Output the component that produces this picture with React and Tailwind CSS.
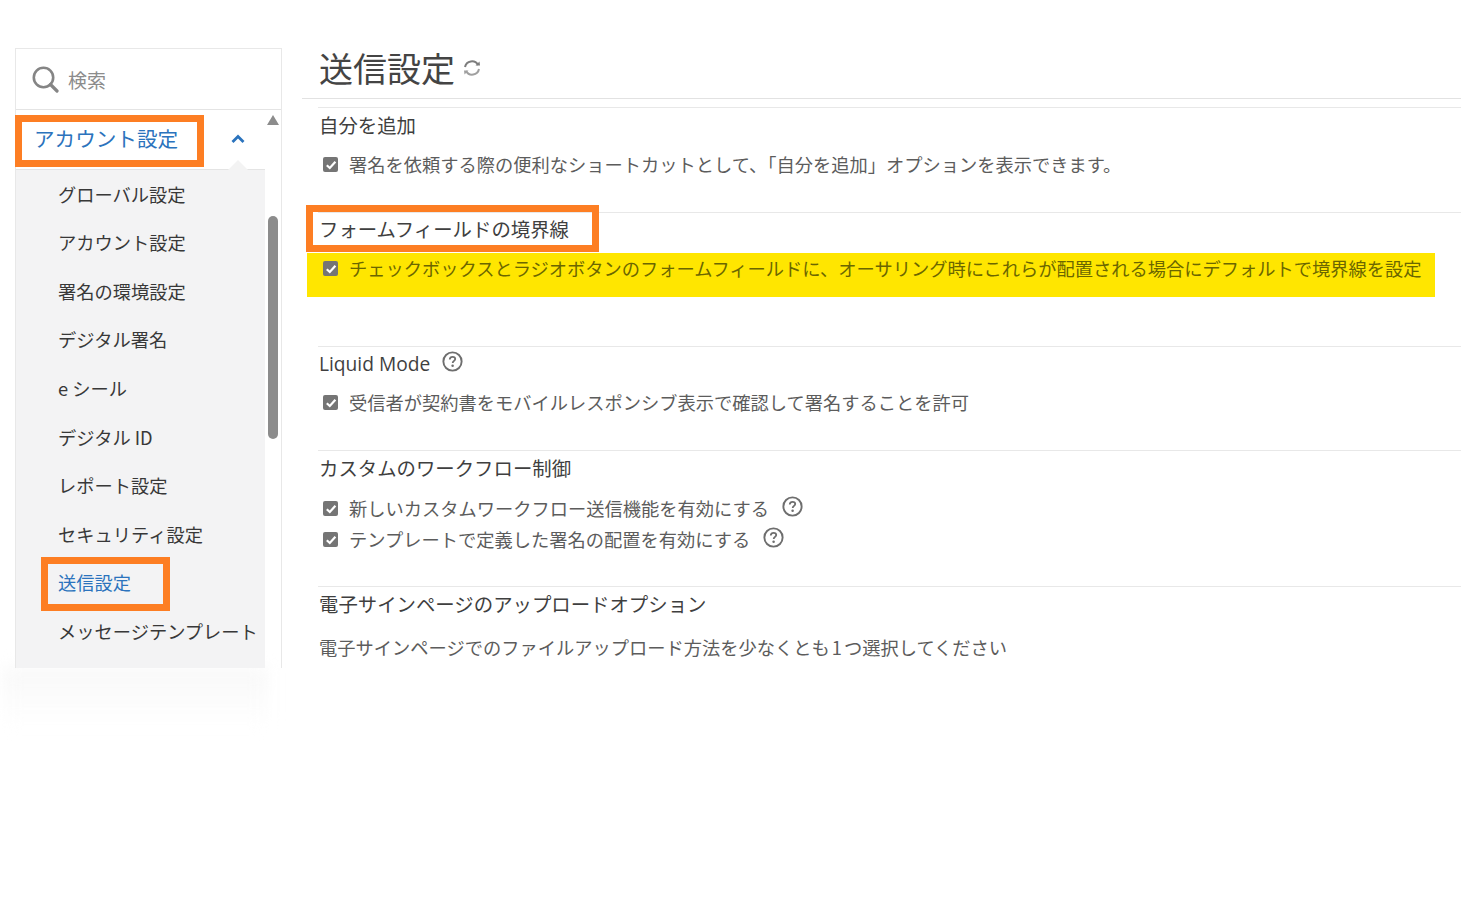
const font = { fontFamily: '"Noto Sans CJK JP", "Noto Sans", sans-serif' };

function Check() {
  return (
    <span className="w-[15px] h-[15px] mt-[1px] rounded-[2px] bg-[#757575] shrink-0 flex items-center justify-center">
      <svg width="12" height="12" viewBox="0 0 12 12" fill="none">
        <path d="M1.8 6.2 L4.8 9 L10.4 2.8" stroke="#ffffff" strokeWidth="2.2" />
      </svg>
    </span>
  );
}

function Help({ className = "" }) {
  return (
    <svg width="21" height="21" viewBox="0 0 20 20" fill="none" className={"shrink-0 " + className}>
      <circle cx="10" cy="10" r="8.7" stroke="#6e6e6e" strokeWidth="1.8" />
      <path d="M7.4 8 C7.4 6.3 8.6 5.5 10 5.5 C11.5 5.5 12.6 6.4 12.6 7.7 C12.6 9.4 10.2 9.5 10.2 11.4" stroke="#6e6e6e" strokeWidth="1.7" />
      <circle cx="10.1" cy="14" r="1.2" fill="#6e6e6e" />
    </svg>
  );
}

function CheckRow({ children, className = "" }) {
  return (
    <div className={"flex items-center gap-[11px] text-[18.25px] leading-[26px] text-[#5c5c5c] whitespace-nowrap " + className}>
      <Check />
      <span>{children}</span>
    </div>
  );
}

const items = ["グローバル設定", "アカウント設定", "署名の環境設定", "デジタル署名", "e シール", "デジタル ID", "レポート設定", "セキュリティ設定", "送信設定", "メッセージテンプレート"];

export default function App() {
  return (
    <div style={font} className="w-[1461px] h-[919px] bg-white flex items-start overflow-hidden relative">
      <aside className="w-[267px] ml-[15px] mt-[48px] shrink-0">
        <div className="h-[620px] border-x border-t border-[#e8e8e8] flex flex-col relative z-10">
          <div className="h-[61px] shrink-0 border-b border-[#e4e4e4] flex items-center pl-[15px] gap-[9px]">
            <svg width="28" height="28" viewBox="0 0 28 28" fill="none">
              <circle cx="12.5" cy="12.5" r="9.7" stroke="#858585" strokeWidth="2.6" />
              <path d="M19.5 19.5 L26 26" stroke="#858585" strokeWidth="3.2" strokeLinecap="round" />
            </svg>
            <span className="text-[19px] text-[#8c8c8c] mt-[3px]">検索</span>
          </div>
          <div className="flex-1 flex min-h-0">
            <div className="w-[249px] flex flex-col">
              <div className="h-[60px] shrink-0 flex items-center justify-between pl-[18px] pr-[20px] bg-white border-b border-[#e4e4e4] relative">
                <span className="text-[20.6px] text-[#2b73bd] whitespace-nowrap -mt-[3px]">アカウント設定</span>
                <svg width="14" height="10" viewBox="0 0 14 10" fill="none" className="-mt-[2px]">
                  <path d="M1.5 8 L7 2.5 L12.5 8" stroke="#2b73bd" strokeWidth="2.8" />
                </svg>
                <span className="absolute right-[17px] -bottom-[1px] w-0 h-0 border-x-[10px] border-x-transparent border-b-[10px] border-b-[#f3f3f3]" />
              </div>
              <div className="flex-1 bg-[#f3f3f4] pl-[42px]">
                {items.map((t) => (
                  <div key={t} className={"h-[48.6px] flex items-center text-[18.25px] whitespace-nowrap " + (t === "送信設定" ? "text-[#2b73bd]" : "text-[#383838]")}>
                    {t}
                  </div>
                ))}
              </div>
            </div>
            <div className="flex-1 flex flex-col items-center pt-[5px]">
              <span className="w-0 h-0 border-x-[6px] border-x-transparent border-b-[10px] border-b-[#8c8c8c]" />
              <span className="w-[10px] h-[223px] mt-[91px] rounded-[5px] bg-[#8c8c8c]" />
            </div>
          </div>
        </div>
        <div className="h-[58px] bg-gradient-to-b from-[#f8f8f8] to-white -ml-[12px] mr-[14px] blur-sm" />
      </aside>

      <main className="flex-1 ml-[20px] mt-[48px] min-w-0">
        <header className="h-[51px] border-b border-[#e2e2e2] flex items-start pl-[17px] gap-[7px]">
          <h1 className="text-[34px] leading-[40px] text-[#444444] font-normal">送信設定</h1>
          <svg width="20" height="20" viewBox="0 0 20 20" fill="none" className="mt-[10px]">
            <path d="M3 9 A7 7 0 0 1 16 7" stroke="#7d7d7d" strokeWidth="2" />
            <path d="M17 11 A7 7 0 0 1 4 13" stroke="#a0a0a0" strokeWidth="2" />
            <path d="M13.5 7.5 L18 7.5 L17.5 3.5 Z" fill="#7d7d7d" />
            <path d="M6.5 12.5 L2 12.5 L2.5 16.5 Z" fill="#a0a0a0" />
          </svg>
        </header>
        <div className="ml-[16px] mt-[8px]">
          <section className="h-[105px] border-t border-[#e8e8e8] pt-[2px] pl-[1px]">
            <h2 className="text-[19.4px] leading-[30px] text-[#3f3f3f] font-normal">自分を追加</h2>
            <CheckRow className="mt-[11px] pl-[4px]">署名を依頼する際の便利なショートカットとして、「自分を追加」オプションを表示できます。</CheckRow>
          </section>
          <section className="h-[134px] border-t border-[#e8e8e8] pt-[1px] pl-[1px]">
            <h2 className="text-[19.4px] leading-[30px] text-[#3f3f3f] font-normal">フォームフィールドの境界線</h2>
            <div className="mt-[9px] -ml-[12px] w-[1128px] h-[44px] bg-[#ffe600] pl-[16px] pt-[2px]">
              <CheckRow className="text-[#6b6600]">チェックボックスとラジオボタンのフォームフィールドに、オーサリング時にこれらが配置される場合にデフォルトで境界線を設定</CheckRow>
            </div>
          </section>
          <section className="h-[104px] border-t border-[#e8e8e8] pt-[1px] pl-[1px]">
            <div className="flex items-center gap-[12px]">
              <h2 className="text-[19.2px] leading-[32px] text-[#3f3f3f] font-normal" style={{ fontFamily: '"Open Sans", "Noto Sans", sans-serif' }}>Liquid Mode</h2>
              <Help className="-mt-[5px]" />
            </div>
            <CheckRow className="mt-[9px] pl-[4px]">受信者が契約書をモバイルレスポンシブ表示で確認して署名することを許可</CheckRow>
          </section>
          <section className="h-[136px] border-t border-[#e8e8e8] pt-[2px] pl-[1px]">
            <h2 className="text-[19.4px] leading-[30px] text-[#3f3f3f] font-normal">カスタムのワークフロー制御</h2>
            <CheckRow className="mt-[12px] pl-[4px]">
              <span className="inline-flex items-center gap-[13px]">新しいカスタムワークフロー送信機能を有効にする<Help className="-mt-[4px]" /></span>
            </CheckRow>
            <CheckRow className="mt-[5px] pl-[4px]">
              <span className="inline-flex items-center gap-[13px]">テンプレートで定義した署名の配置を有効にする<Help className="-mt-[4px]" /></span>
            </CheckRow>
          </section>
          <section className="border-t border-[#e8e8e8] pt-[2px] pl-[1px]">
            <h2 className="text-[19.4px] leading-[30px] text-[#3f3f3f] font-normal">電子サインページのアップロードオプション</h2>
            <p className="mt-[15px] text-[18.25px] leading-[26px] text-[#5c5c5c] whitespace-nowrap [word-spacing:-2px]">電子サインページでのファイルアップロード方法を少なくとも 1 つ選択してください</p>
          </section>
        </div>
      </main>

      <div className="absolute left-[15px] top-[115px] w-[189px] h-[52px] border-[7px] border-[#fd7e23] z-20" />
      <div className="absolute left-[41px] top-[557px] w-[129px] h-[54px] border-[7px] border-[#fd7e23] z-20" />
      <div className="absolute left-[306px] top-[205px] w-[293px] h-[47px] border-[7px] border-[#fd7e23] z-20" />
    </div>
  );
}
